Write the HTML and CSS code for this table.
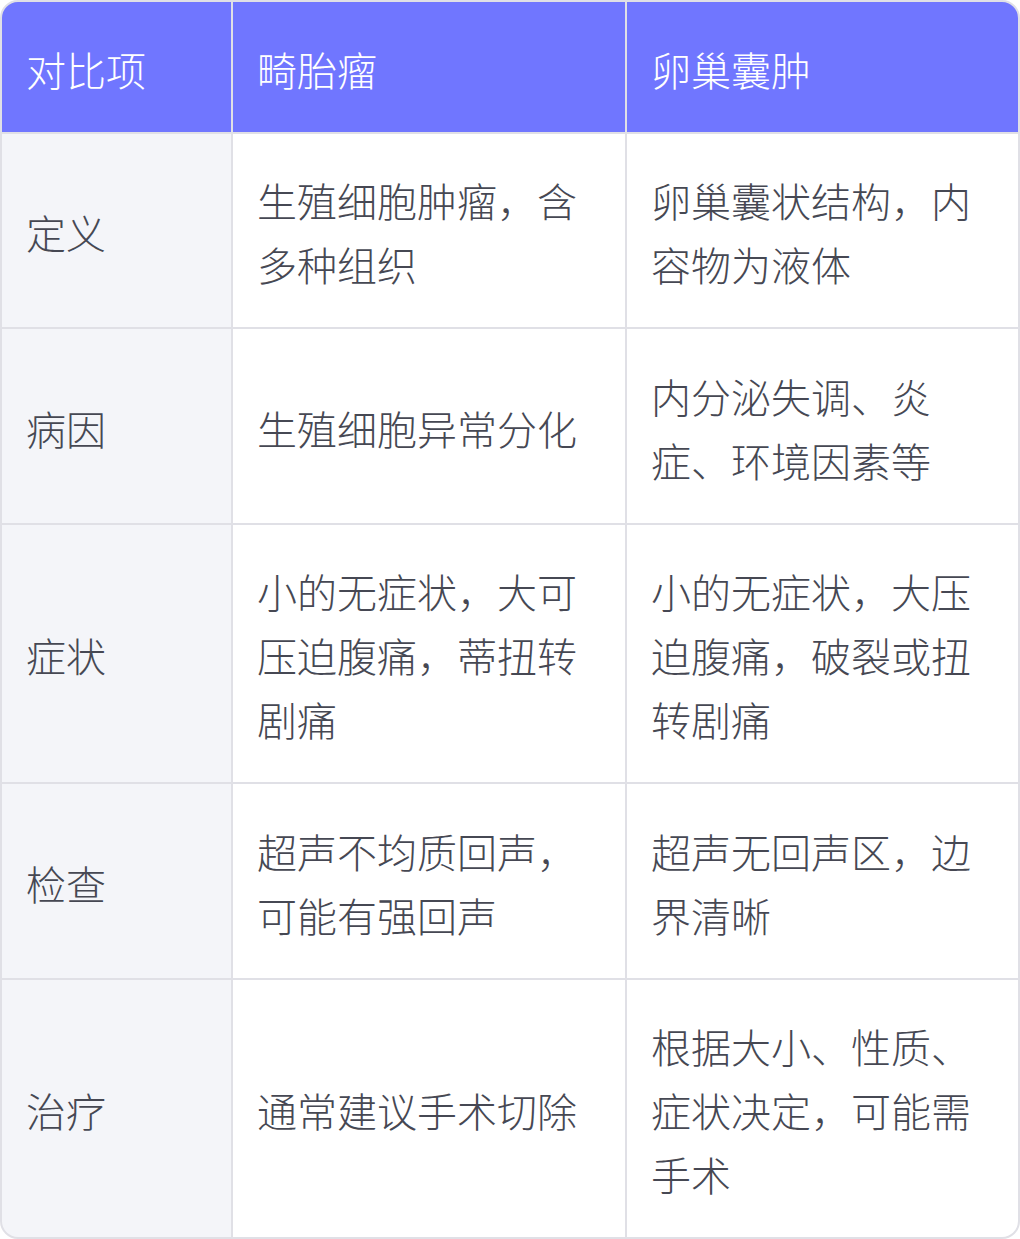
FILE: index.html
```html
<!DOCTYPE html>
<html lang="zh-CN">
<head>
<meta charset="utf-8">
<title>畸胎瘤与卵巢囊肿对比</title>
<link rel="stylesheet" href="styles.css">
</head>
<body>
<div class="table">
  <div class="cell head">对比项</div>
  <div class="cell head">畸胎瘤</div>
  <div class="cell head">卵巢囊肿</div>

  <div class="cell label">定义</div>
  <div class="cell">生殖细胞肿瘤，含多种组织</div>
  <div class="cell">卵巢囊状结构，内容物为液体</div>

  <div class="cell label">病因</div>
  <div class="cell">生殖细胞异常分化</div>
  <div class="cell">内分泌失调、炎症、环境因素等</div>

  <div class="cell label">症状</div>
  <div class="cell">小的无症状，大可压迫腹痛，蒂扭转剧痛</div>
  <div class="cell">小的无症状，大压迫腹痛，破裂或扭转剧痛</div>

  <div class="cell label">检查</div>
  <div class="cell">超声不均质回声，可能有强回声</div>
  <div class="cell">超声无回声区，边界清晰</div>

  <div class="cell label">治疗</div>
  <div class="cell">通常建议手术切除</div>
  <div class="cell">根据大小、性质、症状决定，可能需手术</div>
</div>
</body>
</html>
```

FILE: styles.css
```css
html, body {
  margin: 0;
  padding: 0;
  background: #ffffff;
}

.table {
  box-sizing: border-box;
  width: 1020px;
  border: 2px solid #e0e0e6;
  border-radius: 18px;
  overflow: hidden;
  display: grid;
  grid-template-columns: 229px 392px 1fr;
  gap: 2px;
  background: #e0e0e6;
  font-family: "Noto Sans CJK SC", "Noto Sans", sans-serif;
  font-weight: 300;
  font-size: 40px;
  line-height: 64px;
  color: #464853;
}

.cell {
  background: #ffffff;
  padding: 34.5px 24px 31px;
  display: flex;
  align-items: center;
}

.cell.head {
  background: #7076ff;
  color: #ffffff;
}

.cell.label {
  background: #f4f5f9;
}
```
